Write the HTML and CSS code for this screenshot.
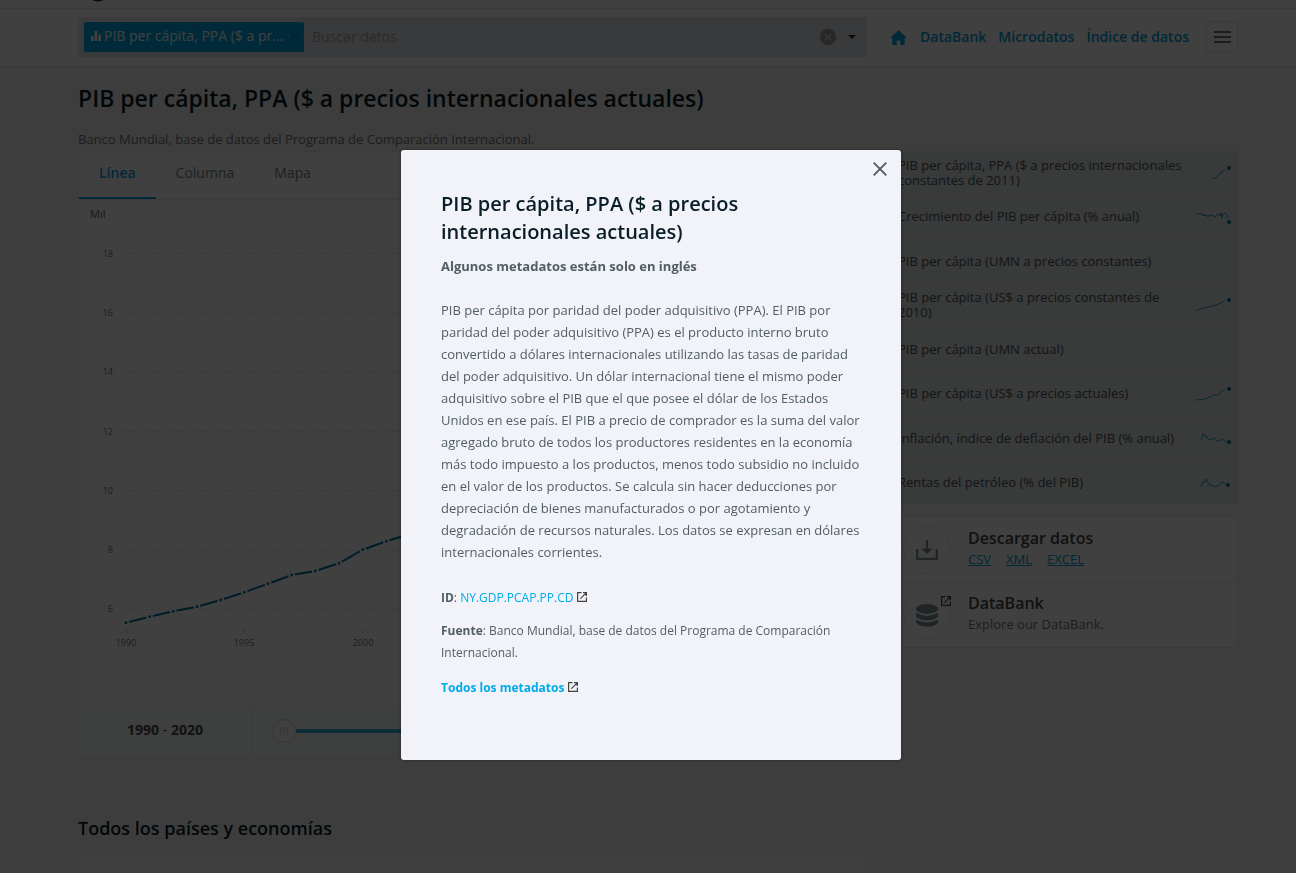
FILE: index.html
```html
<!DOCTYPE html>
<html lang="es">
<head>
<meta charset="utf-8">
<meta name="viewport" content="width=device-width, initial-scale=1">
<title>PIB per cápita, PPA ($ a precios internacionales actuales)</title>
<link rel="stylesheet" href="styles.css">
</head>
<body>
<svg class="defs" aria-hidden="true">
  <symbol id="external" viewBox="0 0 10 10">
    <path d="M4.5 .6H.6v8.8h8.8V5.5M6 .6h3.4V4M9.2 .8L3.4 6.6" fill="none" stroke="currentColor" stroke-width="1.2"/>
  </symbol>
</svg>

<div class="strip">
  <div class="container">
    <svg class="strip-logo" width="30" height="8" viewBox="0 0 30 8" aria-hidden="true"><ellipse cx="20" cy="-2" rx="5" ry="2.5" fill="none" stroke="#002244" stroke-width="2"/></svg>
  </div>
</div>
<header class="bar">
  <div class="container bar-row">
    <form class="search">
      <span class="chip">
        <svg width="10" height="10" viewBox="0 0 10 10" aria-hidden="true"><path d="M0 5h2.6v5H0zM3.6 0h2.6v10H3.6zM7.3 3.4h2.6V10H7.3z" fill="#fff"/></svg>
        <span class="chip-text">PIB per cápita, PPA ($ a pr...</span>
        <button class="plain chip-x" type="button" aria-label="Quitar"><svg width="8" height="8" viewBox="0 0 8 8"><path d="M0 0l8 8M8 0L0 8" stroke="#0085b5" stroke-width="1.2"/></svg></button>
      </span>
      <input class="search-input" type="text" placeholder="Buscar datos" aria-label="Buscar datos">
      <button class="plain" type="button" aria-label="Borrar"><svg width="16" height="16" viewBox="0 0 16 16"><circle cx="8" cy="8" r="8" fill="#9a9a9a"/><path d="M4.6 4.6l6.8 6.8M11.4 4.6l-6.8 6.8" stroke="#e4e8ec" stroke-width="1.3"/></svg></button>
      <button class="plain" type="button" aria-label="Abrir lista"><svg width="8" height="4" viewBox="0 0 8 4"><path d="M0 0h8L4 4z" fill="#333"/></svg></button>
    </form>
    <nav class="nav">
      <a class="home" href="#" aria-label="Inicio"><svg width="17" height="15" viewBox="0 0 17 15"><path d="M8.500 0L17 8h-2.300v7h-4.400v-4.600H6.700V15H2.300V8H0z" fill="currentColor"/></svg></a>
      <a href="#">DataBank</a>
      <a href="#">Microdatos</a>
      <a href="#">Índice de datos</a>
    </nav>
    <button class="menu" type="button" aria-label="Menú"><svg width="17" height="12" viewBox="0 0 17 12"><path d="M0 1h17M0 6h17M0 11h17" stroke="#6f6f6f" stroke-width="2"/></svg></button>
  </div>
</header>

<main class="container">
  <h1 class="title">PIB per cápita, PPA ($ a precios internacionales actuales)</h1>
  <p class="source">Banco Mundial, base de datos del Programa de Comparación Internacional.</p>
  <div class="columns">
    <section class="card">
      <div class="tabs">
        <button class="tab tab-on" type="button">Línea</button>
        <button class="tab" type="button">Columna</button>
        <button class="tab" type="button">Mapa</button>
      </div>
      <svg class="chart" viewBox="0 0 786 505" role="img" aria-label="Gráfico de línea">
        <text x="11" y="18" class="unit">Mil</text>
        <g class="grid">
          <path d="M42 53.500H776M42 113.500H776M42 172.500H776M42 231.500H776M42 290.500H776M42 350.500H776M42 409.500H776"/>
        </g>
        <g class="ylabels">
          <text x="34" y="57">18</text><text x="34" y="116">16</text><text x="34" y="175">14</text><text x="34" y="235">12</text><text x="34" y="294">10</text><text x="34" y="353">8</text><text x="34" y="412">6</text>
        </g>
        <path class="ticks" d="M47.500 430v3M165.500 430v3M283.500 430v3M402.500 430v3M520.500 430v3M638.500 430v3M756.500 430v3"/>
        <g class="xlabels">
          <text x="47" y="446">1990</text><text x="165" y="446">1995</text><text x="284" y="446">2000</text>
        </g>
        <polyline class="line" points="47,422.700 70.700,416.700 94.300,411.300 118,406.700 141.700,400 165.300,392.300 189,383.700 212.700,375 236.300,371 260,363.300 283.700,349.700 307.300,341.300 331,334 402,300 473,265 520,240 591,190 638,140 709,80 756,90"/>
        <g class="dots">
          <circle cx="47" cy="422.700" r="2.400"/><circle cx="70.700" cy="416.700" r="2.400"/><circle cx="94.300" cy="411.300" r="2.400"/><circle cx="118" cy="406.700" r="2.400"/><circle cx="141.700" cy="400" r="2.400"/><circle cx="165.300" cy="392.300" r="2.400"/><circle cx="189" cy="383.700" r="2.400"/><circle cx="212.700" cy="375" r="2.400"/><circle cx="236.300" cy="371" r="2.400"/><circle cx="260" cy="363.300" r="2.400"/><circle cx="283.700" cy="349.700" r="2.400"/><circle cx="307.300" cy="341.300" r="2.400"/>
        </g>
      </svg>
      <div class="range">
        <div class="years"><b>1990</b> - <b>2020</b></div>
        <div class="slider">
          <button class="knob" type="button" aria-label="Año inicial"><svg width="8" height="8" viewBox="0 0 8 8"><path d="M.5 0v8M4 0v8M7.500 0v8" stroke="#d2d2d2"/></svg></button>
          <span class="track"></span>
        </div>
      </div>
    </section>

    <aside class="side">
      <ul class="related">
        <li><a href="#">PIB per cápita, PPA ($ a precios internacionales constantes de 2011)</a><svg class="spark" viewBox="0 0 36 16"><path d="M17 13.500q4 0 6-3t7-6"/><circle cx="34" cy="3" r="2"/></svg></li>
        <li><a href="#">Crecimiento del PIB per cápita (% anual)</a><svg class="spark" viewBox="0 0 36 16"><path d="M1 5h2l1-1 1 1h3v2l1-2 1 2 1-1 2 2 1-2 2 1 2-1 2 2 2-2 2-1 1 2 1-3 1 5 1-4 2-1 2 2v3"/><circle cx="34" cy="13" r="2"/></svg></li>
        <li><a href="#">PIB per cápita (UMN a precios constantes)</a></li>
        <li><a href="#">PIB per cápita (US$ a precios constantes de 2010)</a><svg class="spark" viewBox="0 0 36 16"><path d="M1 14l4-2 8-2 8-2 9-4"/><circle cx="34" cy="3" r="2"/></svg></li>
        <li><a href="#">PIB per cápita (UMN actual)</a></li>
        <li><a href="#">PIB per cápita (US$ a precios actuales)</a><svg class="spark" viewBox="0 0 36 16"><path d="M1 14l5-.500 5-1 4-1.500 4-2h4l4-4 3-2"/><circle cx="34" cy="3" r="2"/></svg></li>
        <li><a href="#">Inflación, índice de deflación del PIB (% anual)</a><svg class="spark" viewBox="0 0 36 16"><path d="M6 10l2-6 2 1v2l1-1 1 2 2 2 5-2 3 3 3 0 2-2 4 3"/><circle cx="34" cy="12" r="2"/></svg></li>
        <li><a href="#">Rentas del petróleo (% del PIB)</a><svg class="spark" viewBox="0 0 36 16"><path d="M6 13l2-5 1 1 2-4 4 7 2-1 2 2 3-1 2 0 2-3 2-1 2 2"/><circle cx="33" cy="11" r="2"/></svg></li>
      </ul>
      <div class="actions">
        <div class="action">
          <span class="round"><svg width="22" height="20" viewBox="0 0 22 20"><path d="M1.200 9v9.800h19.600V9" fill="none" stroke="#7d9098" stroke-width="2.200"/><path d="M11 0v10" stroke="#7d9098" stroke-width="2.400"/><path d="M5.500 8.500h11L11 14z" fill="#7d9098"/></svg></span>
          <div class="action-body">
            <h3 class="action-title">Descargar datos</h3>
            <p class="files"><a href="#">CSV</a><a href="#">XML</a><a href="#">EXCEL</a></p>
          </div>
        </div>
        <div class="action">
          <span class="round"><svg width="22" height="23" viewBox="0 0 22 23"><g fill="#7d9098"><ellipse cx="11" cy="5" rx="11" ry="5"/><path d="M0 8.500q11 6.500 22 0v4q-2 4-11 4t-11-4z"/><path d="M0 15.500q11 6 22 0v3q-2 4-11 4t-11-4z"/></g><path d="M0 8q11 5.500 22 0M0 14.500q11 5.500 22 0" fill="none" stroke="#fff" stroke-width="1.500"/></svg><svg class="badge" width="10" height="10"><use href="#external"/></svg></span>
          <div class="action-body">
            <h3 class="action-title">DataBank</h3>
            <p class="action-note">Explore our DataBank.</p>
          </div>
        </div>
      </div>
    </aside>
  </div>
  <h2 class="subtitle">Todos los países y economías</h2>
  <div class="columns"><section class="card next"></section></div>
</main>

<div class="overlay">
  <div class="modal" role="dialog" aria-labelledby="modal-title">
    <button class="plain close" type="button" aria-label="Cerrar"><svg width="14" height="14" viewBox="0 0 14 14"><path d="M.7 .7l12.600 12.600M13.300 .7L.7 13.300" stroke="#4c5a5f" stroke-width="1.800"/></svg></button>
    <h2 class="modal-title" id="modal-title">PIB per cápita, PPA ($ a precios internacionales actuales)</h2>
    <p class="modal-note">Algunos metadatos están solo en inglés</p>
    <p class="modal-text">PIB per cápita por paridad del poder adquisitivo (PPA). El PIB por paridad del poder adquisitivo (PPA) es el producto interno bruto convertido a dólares internacionales utilizando las tasas de paridad del poder adquisitivo. Un dólar internacional tiene el mismo poder adquisitivo sobre el PIB que el que posee el dólar de los Estados Unidos en ese país. El PIB a precio de comprador es la suma del valor agregado bruto de todos los productores residentes en la economía más todo impuesto a los productos, menos todo subsidio no incluido en el valor de los productos. Se calcula sin hacer deducciones por depreciación de bienes manufacturados o por agotamiento y degradación de recursos naturales. Los datos se expresan en dólares internacionales corrientes.</p>
    <p class="meta"><b>ID</b>: <a href="#">NY.GDP.PCAP.PP.CD</a> <svg class="ext" width="10" height="10"><use href="#external"/></svg></p>
    <p class="meta"><b>Fuente</b>: Banco Mundial, base de datos del Programa de Comparación Internacional.</p>
    <p class="meta meta-all"><a href="#"><b>Todos los metadatos</b></a> <svg class="ext" width="10" height="10"><use href="#external"/></svg></p>
  </div>
</div>
</body>
</html>
```

FILE: styles.css
```css
* { box-sizing: border-box; }
body {
  margin: 0;
  height: 100vh;
  overflow: hidden;
  background: #f4f4f4;
  color: #4a4a4a;
  font: 13px/22px "Open Sans", sans-serif;
}
h1, h2, h3, p, ul { margin: 0; padding: 0; }
a { color: #00a0dc; text-decoration: none; }
button, input { font: inherit; }
svg { display: block; flex: none; }
.defs { position: absolute; width: 0; height: 0; }
.plain { display: flex; padding: 0; border: 0; background: none; }
.container {
  max-width: 1200px;
  margin: 0 auto;
  padding: 0 10px 0 30px;
}

.strip { height: 9px; overflow: hidden; background: #fff; border-bottom: 1px solid #e4e4e4; }
.bar { background: #fff; border-bottom: 1px solid #e4e4e4; }
.bar-row { display: flex; align-items: center; padding-top: 8px; padding-bottom: 9px; }
.search {
  display: flex;
  flex: 1;
  align-items: center;
  gap: 12px;
  height: 40px;
  padding: 0 11px 0 6px;
  border-radius: 2px;
  background: #e2e6ea;
}
.chip {
  display: flex;
  align-items: center;
  gap: 3px;
  width: 220px;
  height: 30px;
  padding: 0 6px 2px 7px;
  border-radius: 2px;
  background: #00a8e6;
  color: #fff;
  font-size: 14px;
}
.chip-text { flex: 1; white-space: nowrap; }
.search-input {
  flex: 1;
  min-width: 0;
  margin-left: -4px;
  padding: 0;
  border: 0;
  background: none;
  font-size: 14px;
}
.search-input::placeholder { color: #a9a9a9; opacity: 1; }
.nav {
  display: flex;
  align-items: center;
  gap: 12px;
  margin: 0 17px 0 23px;
  font-size: 14px;
  font-weight: 600;
}
.home { padding-right: 1px; }
.menu {
  display: flex;
  align-items: center;
  justify-content: center;
  width: 32px;
  height: 32px;
  padding: 0;
  border: 1px solid #e4e4e4;
  border-radius: 2px;
  background: #fff;
}

.title { padding-top: 14px; color: #0a1e27; font-size: 23px; line-height: 34px; font-weight: 600; }
.source { padding: 13px 0 1px; color: #757575; }
.columns { display: grid; grid-template-columns: minmax(0, 788fr) minmax(0, 352fr); gap: 20px; align-items: start; }
.card { border: 1px solid #ececec; border-radius: 2px; background: #fff; }
.tabs { display: flex; height: 48px; border-bottom: 1px solid #ececec; }
.tab {
  padding: 0 20px 4px;
  border: 0;
  border-bottom: 2px solid transparent;
  background: none;
  color: #7a8488;
  font-size: 14px;
}
.tab-on { border-color: #00a8e6; color: #00a0dc; font-weight: 600; }
.chart { width: 100%; height: auto; font-size: 9px; fill: #777; }
.unit { font-size: 11px; fill: #666; }
.grid path { fill: none; stroke: #e0e0e0; stroke-dasharray: 3 3; }
.ylabels { text-anchor: end; }
.xlabels { text-anchor: middle; }
.ticks { stroke: #bbb; }
.line { fill: none; stroke: #006f9c; stroke-width: 2; }
.dots circle { fill: #006f9c; stroke: #fff; stroke-width: 2; }
.range { display: flex; height: 50px; border-top: 1px solid #ececec; background: #f7fbfa; }
.years { width: 173px; padding-top: 13px; border-right: 1px solid #ececec; font-size: 14px; text-align: center; }
.slider { display: flex; flex: 1; align-items: center; padding: 0 20px; }
.knob {
  display: flex;
  align-items: center;
  justify-content: center;
  width: 24px;
  height: 24px;
  padding: 0;
  border: 1px solid #d8d8d8;
  border-radius: 50%;
  background: #fff;
}
.track { flex: 1; height: 4px; background: #31b4e0; }

.related { display: grid; grid-auto-rows: 1fr; min-height: 354px; list-style: none; }
.related li {
  display: flex;
  align-items: center;
  padding: 0 7px 0 12px;
  border-bottom: 1px solid #ececec;
  background: #e2e6e8;
  line-height: 15px;
}
.related a { flex: 1; color: #4c565a; }
.spark { width: 36px; height: 16px; margin-left: 8px; }
.spark path { fill: none; stroke: #3298c0; }
.spark circle { fill: #006f9c; }
.actions { margin-top: 11px; border: 1px solid #e8e8e8; border-radius: 2px; background: #fff; }
.action { display: flex; align-items: center; gap: 17px; height: 65px; padding: 0 16px; }
.action + .action { border-top: 1px solid #e8e8e8; }
.action-body { padding-bottom: 4px; }
.round {
  position: relative;
  display: flex;
  flex: none;
  align-items: center;
  justify-content: center;
  width: 48px;
  height: 48px;
  border: 1px solid #e8e8e8;
  border-radius: 50%;
}
.badge { position: absolute; top: 4px; right: -1px; color: #3c464a; }
.action-title { color: #444; font-size: 16px; line-height: 22px; font-weight: 600; }
.files { display: flex; gap: 15px; line-height: 20px; }
.files a { text-decoration: underline; }
.action-note { color: #757575; line-height: 20px; }
.subtitle { padding: 60px 0 14px; color: #0a1e27; font-size: 18px; line-height: 24px; font-weight: 600; }
.next { height: 18px; border-bottom: 0; }

.overlay {
  position: fixed;
  inset: 0;
  display: flex;
  align-items: flex-start;
  justify-content: center;
  padding: 150px 0 0 6px;
  background: rgba(0, 0, 0, .75);
}
.modal {
  position: relative;
  width: 500px;
  padding: 40px 40px 61px;
  border-radius: 3px;
  background: #f1f3f8;
  color: #525e62;
  box-shadow: 0 0 4px rgba(0, 0, 0, .4);
}
.close { position: absolute; top: 12px; right: 14px; }
.modal-title { color: #0a1e27; font-size: 20px; line-height: 28px; font-weight: 600; }
.modal-note { padding: 9px 0 22px; font-weight: 700; }
.modal-text { padding-bottom: 13px; }
.meta { padding-top: 11px; font-size: 12px; }
.meta-all { padding-top: 13px; }
.meta a { color: #00abec; }
.ext { display: inline-block; color: #444; }
```
